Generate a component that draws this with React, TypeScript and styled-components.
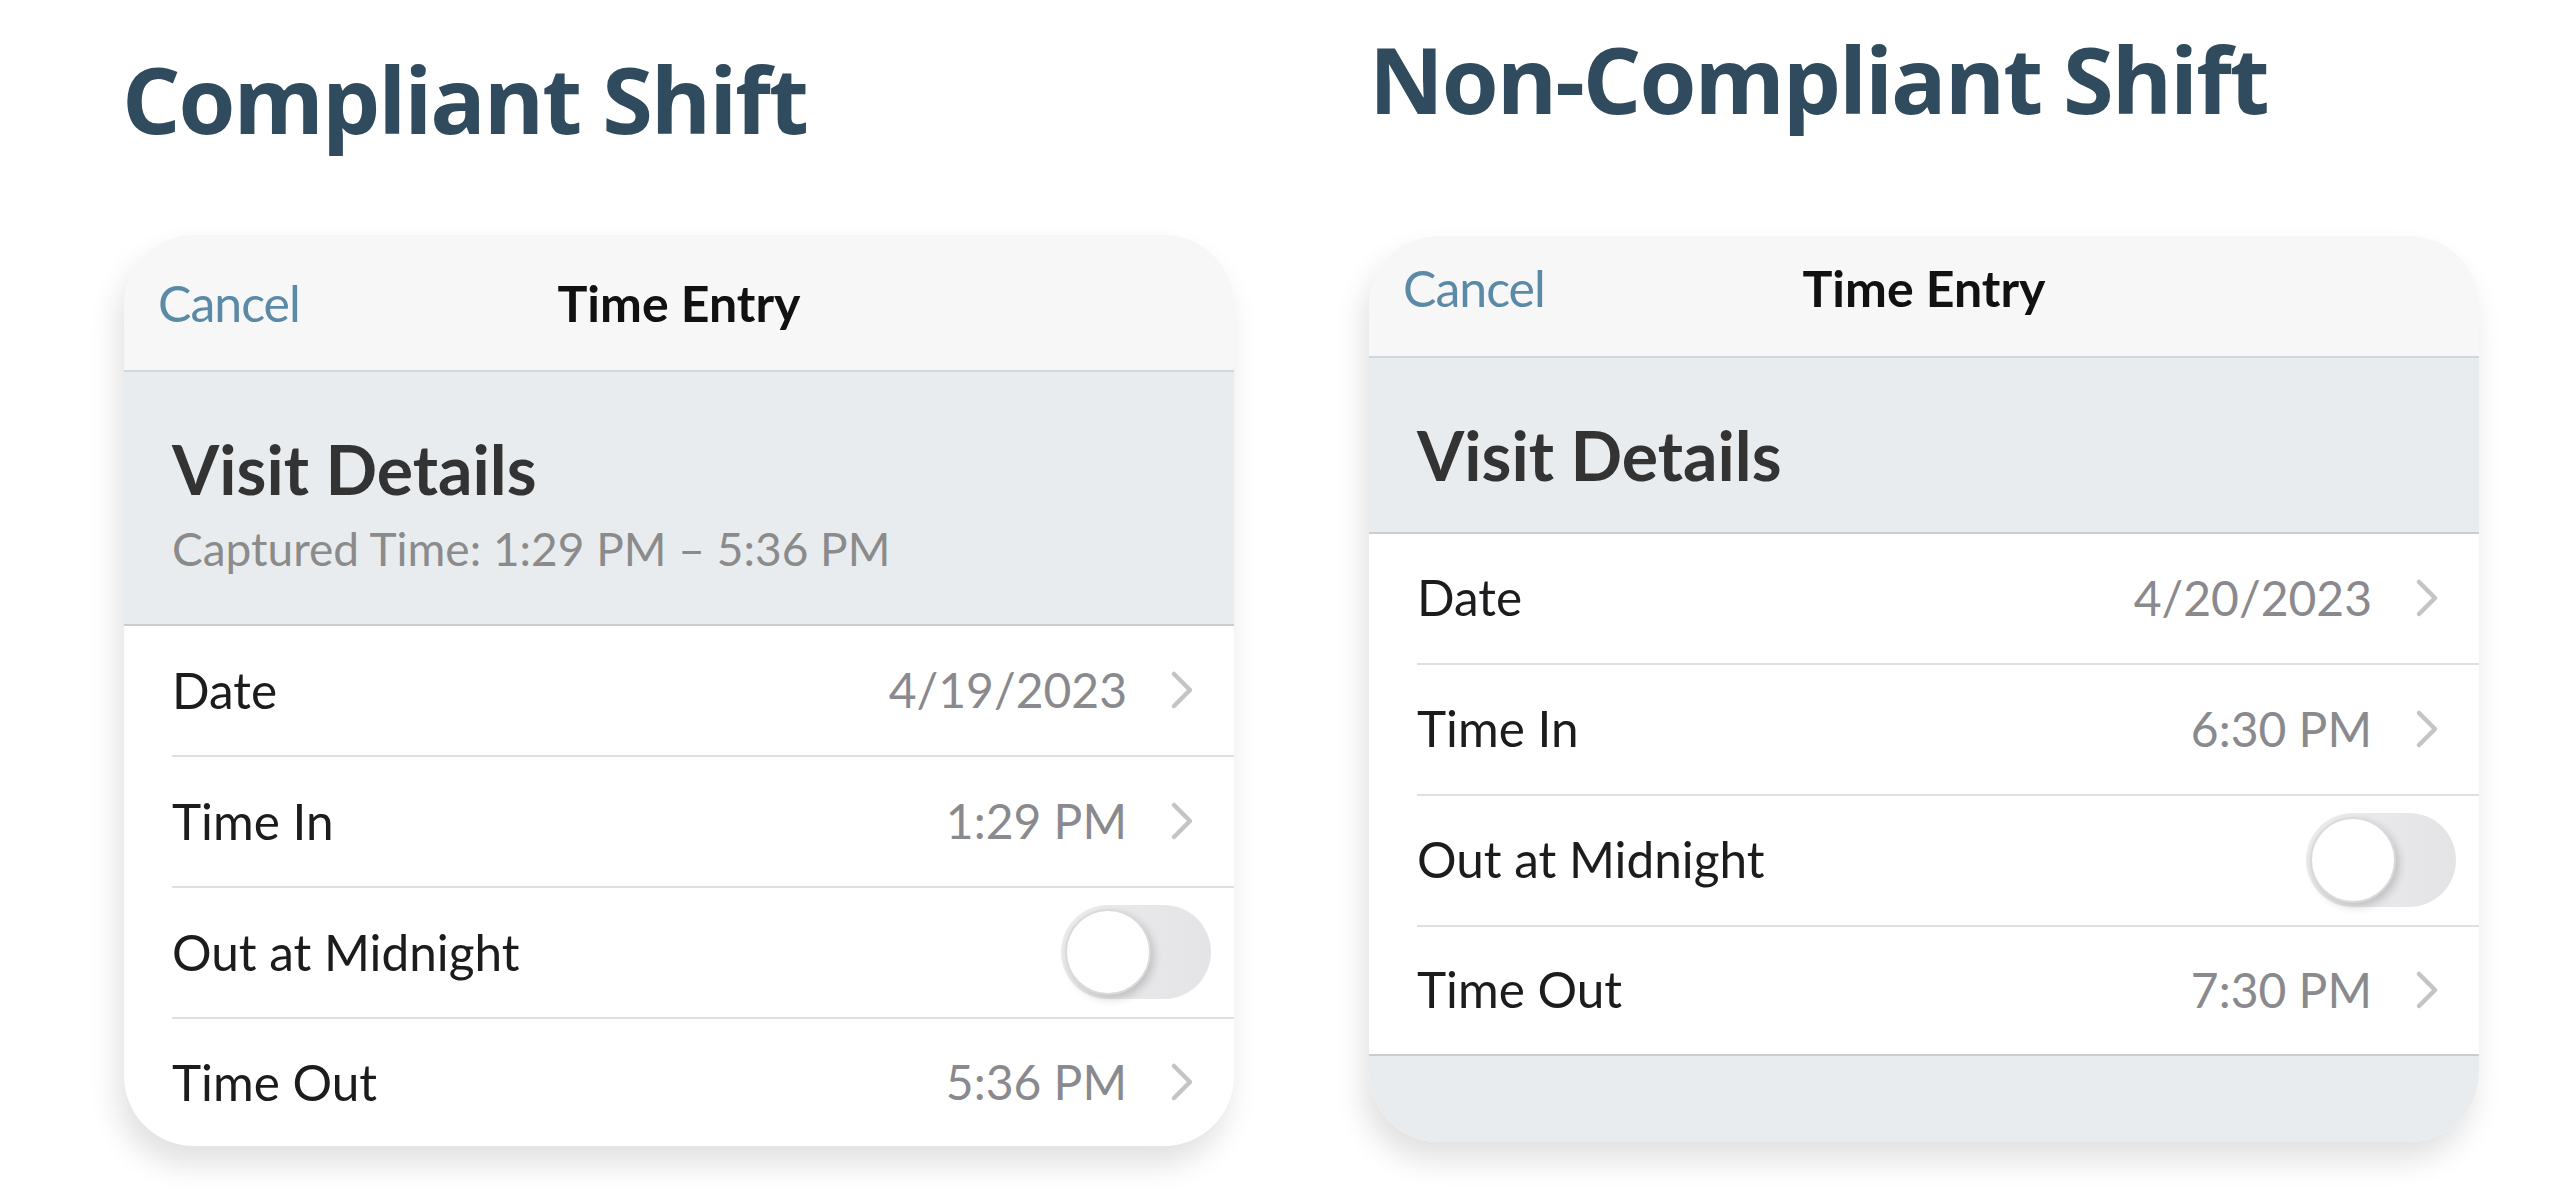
import React from "react";
import styled, { createGlobalStyle } from "styled-components";

const GlobalStyle = createGlobalStyle`
    html, body {
        margin: 0;
        padding: 0;
        background: #ffffff;
    }
    body {
        font-family: Lato, "Open Sans", sans-serif;
        -webkit-font-smoothing: antialiased;
    }
`

const Page = styled.div`
    display: flex;
    gap: 135px;
    padding-left: 124px;
    width: 2560px;
    height: 1202px;
    box-sizing: border-box;
    overflow: hidden;
`

const Column = styled.div<{ $top: number }>`
    display: flex;
    flex-direction: column;
    width: 1110px;
    padding-top: ${p => p.$top}px;
`

const Title = styled.h1<{ $gap: number; $indent: number }>`
    margin: 0 0 ${p => p.$gap}px ${p => p.$indent}px;
    font-family: "Open Sans", sans-serif;
    font-weight: 700;
    font-size: 92px;
    line-height: 1;
    letter-spacing: -2px;
    color: #304b5e;
    white-space: nowrap;
`

const Card = styled.div`
    border-radius: 70px;
    overflow: hidden;
    background: #ffffff;
    box-shadow: -6px 18px 30px rgba(0, 0, 0, 0.12);
`

const NavBar = styled.div<{ $height: number; $pad: number }>`
    display: grid;
    grid-template-columns: 1fr auto 1fr;
    align-items: baseline;
    height: ${p => p.$height}px;
    box-sizing: border-box;
    padding: ${p => p.$pad}px 34px 0;
    background: #f7f7f7;
    border-bottom: 2px solid #d2d5d9;
`

const Cancel = styled.span`
    font-size: 50px;
    line-height: 1.2;
    color: #5b8aa6;
    letter-spacing: -1px;
`

const NavTitle = styled.span`
    font-size: 50px;
    line-height: 1.2;
    font-weight: 700;
    color: #111111;
`

const Summary = styled.div<{ $bottom: number }>`
    display: flex;
    flex-direction: column;
    gap: 11px;
    padding: 56px 48px ${p => p.$bottom}px;
    background: #e9ecef;
    border-bottom: 2px solid #c9cdd2;
`

const SummaryTitle = styled.div`
    font-size: 68px;
    line-height: 1.2;
    font-weight: 700;
    color: #333333;
`

const SummaryNote = styled.div`
    font-size: 46px;
    line-height: 1.2;
    color: #8b8b8b;
`

const Row = styled.div`
    display: flex;
    align-items: center;
    height: 131px;
    box-sizing: border-box;
    margin-left: 48px;
    padding-right: 23px;
    border-bottom: 2px solid #dfdfe1;

    &:last-child {
        height: 127px;
        border-bottom: none;
    }
`

const Label = styled.span`
    flex: 1;
    font-size: 49.5px;
    line-height: 1.2;
    color: #1c1c1e;
`

const Value = styled.span`
    font-size: 48px;
    line-height: 1.2;
    color: #8a8a8e;
`

const Chevron = styled.svg`
    width: 24px;
    height: 40px;
    margin-left: 43px;
    margin-right: 17px;
`

const Track = styled.div`
    display: flex;
    align-items: center;
    width: 150px;
    height: 94px;
    box-sizing: border-box;
    padding: 4px;
    border-radius: 47px;
    background: linear-gradient(90deg, #ececee 0%, #e4e4e6 100%);
`

const Knob = styled.div`
    width: 86px;
    height: 86px;
    box-sizing: border-box;
    border-radius: 50%;
    background: #ffffff;
    border: 2px solid #dadada;
    box-shadow: 3px 4px 8px rgba(0, 0, 0, 0.18);
`

const Footer = styled.div`
    height: 86px;
    background: #e9ecef;
    border-top: 2px solid #c9cdd2;
`

type RowData = { label: string, value?: string, toggle?: boolean }

type CardProps = {
    headerHeight: number,
    headerPad: number,
    summaryBottom: number,
    captured?: string,
    rows: Array<RowData>,
    footer?: boolean
}

const ChevronIcon = () => (
    <Chevron viewBox="0 0 24 40">
        <polyline points="4,4 20,20 4,36" fill="none" stroke="#c4c4c6" strokeWidth="4.5"
            strokeLinecap="round" strokeLinejoin="round" />
    </Chevron>
)

const ShiftCard = ({ headerHeight, headerPad, summaryBottom, captured, rows, footer }: CardProps) => (
    <Card>
        <NavBar $height={headerHeight} $pad={headerPad}>
            <Cancel>Cancel</Cancel>
            <NavTitle>Time Entry</NavTitle>
            <span />
        </NavBar>
        <Summary $bottom={summaryBottom}>
            <SummaryTitle>Visit Details</SummaryTitle>
            {captured ? <SummaryNote>{captured}</SummaryNote> : ""}
        </Summary>
        <div>
            {rows.map(r =>
                <Row key={r.label}>
                    <Label>{r.label}</Label>
                    {r.toggle
                        ? <Track><Knob /></Track>
                        : <>
                            <Value>{r.value}</Value>
                            <ChevronIcon />
                        </>
                    }
                </Row>
            )}
        </div>
        {footer ? <Footer /> : ""}
    </Card>
)

const App = () => {
    return (
        <>
            <GlobalStyle />
            <Page>
                <Column $top={53}>
                    <Title $gap={90} $indent={-2}>Compliant Shift</Title>
                    <ShiftCard headerHeight={137} headerPad={38} summaryBottom={48}
                        captured="Captured Time: 1:29 PM – 5:36 PM"
                        rows={[
                            { label: "Date", value: "4/19/2023" },
                            { label: "Time In", value: "1:29 PM" },
                            { label: "Out at Midnight", toggle: true },
                            { label: "Time Out", value: "5:36 PM" },
                        ]} />
                </Column>
                <Column $top={33}>
                    <Title $gap={111} $indent={0}>Non-Compliant Shift</Title>
                    <ShiftCard headerHeight={122} headerPad={22} summaryBottom={36} footer
                        rows={[
                            { label: "Date", value: "4/20/2023" },
                            { label: "Time In", value: "6:30 PM" },
                            { label: "Out at Midnight", toggle: true },
                            { label: "Time Out", value: "7:30 PM" },
                        ]} />
                </Column>
            </Page>
        </>
    )
}

export default App
